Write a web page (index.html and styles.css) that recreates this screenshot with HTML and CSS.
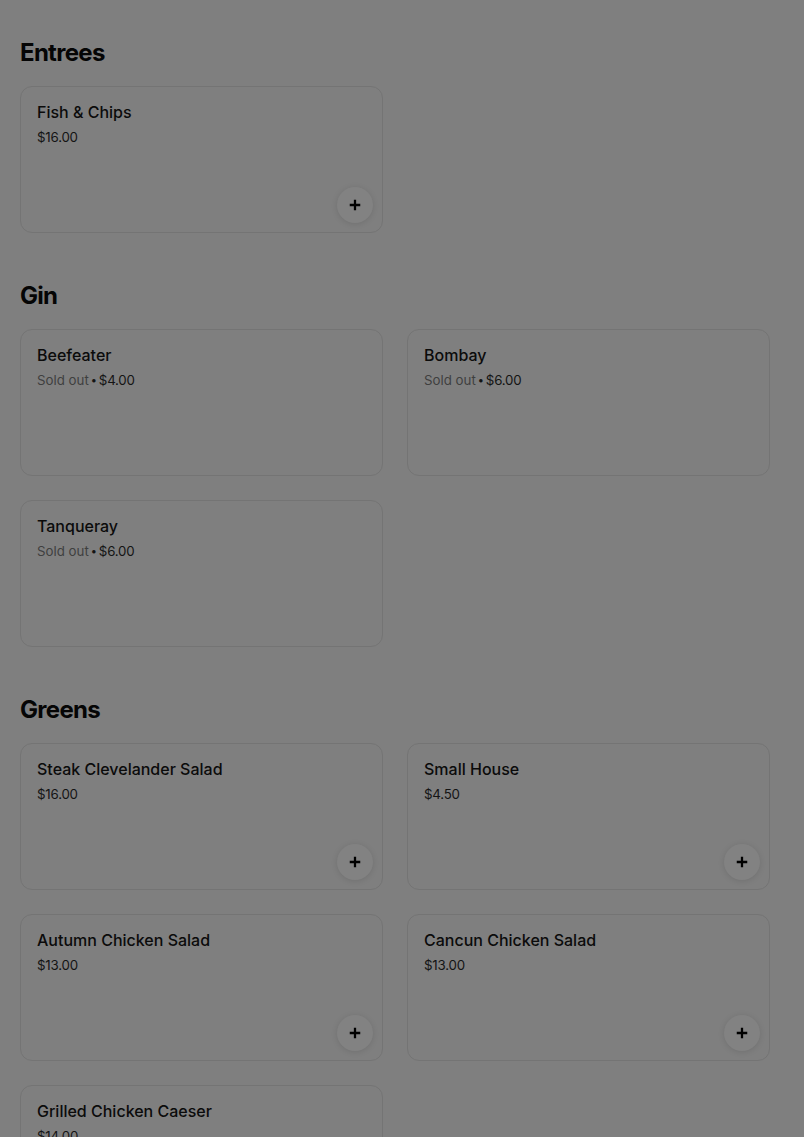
FILE: index.html
```html
<!DOCTYPE html>
<html>
<head>
<meta charset="utf-8">
<link rel="stylesheet" href="styles.css">
</head>
<body>
<main class="menu">
  <section class="section">
    <h2 class="section-title">Entrees</h2>
    <div class="grid">
      <div class="card">
        <div class="name">Fish &amp; Chips</div>
        <div class="meta">$16.00</div>
        <button class="add" aria-label="Add"><svg viewBox="0 0 16 16" width="14" height="14"><path d="M8 2v12M2 8h12" stroke="#000" stroke-width="2.6" fill="none"/></svg></button>
      </div>
    </div>
  </section>
  <section class="section">
    <h2 class="section-title">Gin</h2>
    <div class="grid">
      <div class="card">
        <div class="name">Beefeater</div>
        <div class="meta"><span class="sold">Sold out</span><span class="dot">•</span>$4.00</div>
      </div>
      <div class="card">
        <div class="name">Bombay</div>
        <div class="meta"><span class="sold">Sold out</span><span class="dot">•</span>$6.00</div>
      </div>
      <div class="card">
        <div class="name">Tanqueray</div>
        <div class="meta"><span class="sold">Sold out</span><span class="dot">•</span>$6.00</div>
      </div>
    </div>
  </section>
  <section class="section">
    <h2 class="section-title">Greens</h2>
    <div class="grid">
      <div class="card">
        <div class="name">Steak Clevelander Salad</div>
        <div class="meta">$16.00</div>
        <button class="add" aria-label="Add"><svg viewBox="0 0 16 16" width="14" height="14"><path d="M8 2v12M2 8h12" stroke="#000" stroke-width="2.6" fill="none"/></svg></button>
      </div>
      <div class="card">
        <div class="name">Small House</div>
        <div class="meta">$4.50</div>
        <button class="add" aria-label="Add"><svg viewBox="0 0 16 16" width="14" height="14"><path d="M8 2v12M2 8h12" stroke="#000" stroke-width="2.6" fill="none"/></svg></button>
      </div>
      <div class="card">
        <div class="name">Autumn Chicken Salad</div>
        <div class="meta">$13.00</div>
        <button class="add" aria-label="Add"><svg viewBox="0 0 16 16" width="14" height="14"><path d="M8 2v12M2 8h12" stroke="#000" stroke-width="2.6" fill="none"/></svg></button>
      </div>
      <div class="card">
        <div class="name">Cancun Chicken Salad</div>
        <div class="meta">$13.00</div>
        <button class="add" aria-label="Add"><svg viewBox="0 0 16 16" width="14" height="14"><path d="M8 2v12M2 8h12" stroke="#000" stroke-width="2.6" fill="none"/></svg></button>
      </div>
      <div class="card">
        <div class="name">Grilled Chicken Caeser</div>
        <div class="meta">$14.00</div>
      </div>
    </div>
  </section>
</main>
</body>
</html>
```
FILE: styles.css
```css
html, body {
  margin: 0;
  padding: 0;
  background: #7f7f7f;
  height: 100%;
  overflow: hidden;
}
body {
  font-family: Inter, "Noto Sans", "Liberation Sans", sans-serif;
  color: #0a0a0a;
}
.menu {
  padding: 37px 34px 0 20px;
  display: flex;
  flex-direction: column;
  gap: 47px;
}
.section-title {
  margin: 0 0 17px 0;
  font-size: 24px;
  line-height: 32px;
  font-weight: 700;
  letter-spacing: -0.7px;
  color: #050505;
}
.grid {
  display: grid;
  grid-template-columns: 1fr 1fr;
  column-gap: 24px;
  row-gap: 24px;
}
.card {
  position: relative;
  height: 147px;
  box-sizing: border-box;
  border: 1px solid #747474;
  border-radius: 12px;
  padding: 14px 16px;
}
.name {
  font-size: 16px;
  line-height: 22px;
  font-weight: 500;
  color: #0b0b0b;
}
.meta {
  margin-top: 4px;
  font-size: 13.3px;
  line-height: 20px;
  letter-spacing: -0.2px;
  color: #141414;
}
.sold {
  color: #3f3f3f;
  letter-spacing: 0;
}
.dot {
  display: inline-block;
  font-size: 11px;
  margin: 0 2px 0 2px;
  vertical-align: 1px;
  color: #141414;
}
.add {
  position: absolute;
  right: 9px;
  bottom: 9px;
  width: 36px;
  height: 36px;
  border-radius: 50%;
  border: none;
  background: #828282;
  box-shadow: 0 1px 6px rgba(0,0,0,0.12);
  display: flex;
  align-items: center;
  justify-content: center;
  padding: 0;
}
```
